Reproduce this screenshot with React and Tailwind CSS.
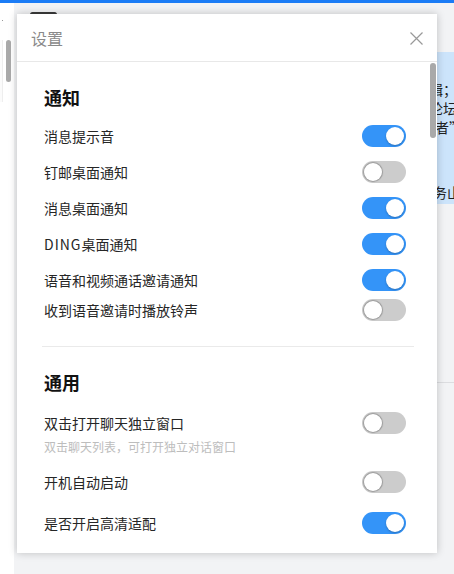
import React from "react";

const font = { fontFamily: '"Noto Sans CJK SC", "Noto Sans", sans-serif' };

function Toggle({ on }) {
  return on ? (
    <div className="relative h-[22px] w-[44px] shrink-0 rounded-full bg-[#3494f8]">
      <div className="absolute right-[2px] top-[2px] h-[18px] w-[18px] rounded-full bg-white shadow-[0_1px_2px_rgba(0,0,0,0.25)]" />
    </div>
  ) : (
    <div className="relative h-[22px] w-[44px] shrink-0 rounded-full bg-[#cccccc]">
      <div className="absolute left-[2px] top-[2px] h-[18px] w-[18px] rounded-full bg-white shadow-[0_0_1px_1px_rgba(0,0,0,0.25)]" />
    </div>
  );
}

function Row({ label, on, h = "h-[36px]" }) {
  return (
    <div className={`flex ${h} items-center justify-between`}>
      <span className="text-[14px] text-[#262626]">{label}</span>
      <Toggle on={on} />
    </div>
  );
}

export default function App() {
  return (
    <div className="relative h-[574px] w-[454px] overflow-hidden bg-white" style={font}>
      <div className="h-[3px] w-full bg-[#1b7cf6]" />
      <div className="flex h-[571px]">
        {/* left strip */}
        <div className="w-[14px] shrink-0 bg-white pt-[17px]">
          <div className="ml-[2px] h-[1px] w-[1px] bg-[#999]" />
          <div className="mt-[19px] flex">
            <div className="h-[62px] w-[3px] border-r border-[#eeeeee] bg-[#fbfbfb]" />
            <div className="ml-[3px] h-[42px] w-[5px] rounded-full bg-[#a9a9a9]" />
          </div>
        </div>
        {/* main */}
        <div className="flex flex-1 bg-[#f2f3f5]">
          <div className="flex-1 pt-[9px]">
            <div className="ml-[16px] h-[5px] w-[27px] rounded-full bg-[#3a3a3a]" />
          </div>
          <div className="w-[40px] shrink-0 overflow-hidden">
            <div className="mt-[49px] h-[152px] bg-[#cce4fb] pt-[6px] text-[14px] leading-[19px] text-[#222]">
              <div className="ml-[15px] mt-[22px] whitespace-nowrap">辑；</div>
              <div className="ml-[15px] whitespace-nowrap">论坛</div>
              <div className="ml-[21px] whitespace-nowrap">者”</div>
              <div className="ml-[5px] mt-[46px] whitespace-nowrap">服务山</div>
            </div>
            <div className="mt-[178px] h-[1px] bg-[#dcdde0]" />
          </div>
        </div>
      </div>

      {/* dialog */}
      <div className="absolute left-[17px] top-[14px] flex h-[539px] w-[420px] flex-col bg-white shadow-[0_0_8px_rgba(0,0,0,0.22)]">
        <div className="flex h-[48px] shrink-0 items-center justify-between border-b border-[#e8e8e8] pl-[14px] pr-[14px]">
          <span className="text-[16px] text-[#8a8a8a]">设置</span>
          <svg width="13" height="13" viewBox="0 0 13 13" className="mt-[1px]">
            <path d="M0.5 0.5 L12.5 12.5 M12.5 0.5 L0.5 12.5" stroke="#999" strokeWidth="1.2" fill="none" />
          </svg>
        </div>
        <div className="relative flex-1 overflow-hidden">
          <div className="absolute right-[1px] top-[1px] h-[75px] w-[6px] rounded-full bg-[#a9a9a9]" />
          <div className="pl-[27px] pr-[31px] pt-[23px]">
            <div className="h-[24px] text-[18px] font-bold leading-[24px] text-[#111]">通知</div>
            <div className="mt-[9px]">
              <Row label="消息提示音" on />
              <Row label="钉邮桌面通知" on={false} />
              <Row label="消息桌面通知" on />
              <Row label={<><span className="tracking-[1px]">DING</span>桌面通知</>} on />
              <Row label="语音和视频通话邀请通知" on />
              <Row label="收到语音邀请时播放铃声" on={false} h="h-[24px]" />
            </div>
            <div className="-ml-[2px] mt-[24px] h-[1px] w-[372px] bg-[#eaeaea]" />
            <div className="mt-[23px] h-[24px] text-[18px] font-bold leading-[24px] text-[#111]">通用</div>
            <div className="mt-[16px]">
              <Row label="双击打开聊天独立窗口" on={false} h="h-[26px]" />
              <div className="mt-[1px] h-[20px] text-[12px] leading-[20px] text-[#bdbdbd]">双击聊天列表，可打开独立对话窗口</div>
              <div className="mt-[7px]">
                <Row label="开机自动启动" on={false} />
                <div className="h-[5px]" />
                <Row label="是否开启高清适配" on />
              </div>
            </div>
          </div>
        </div>
      </div>
    </div>
  );
}
